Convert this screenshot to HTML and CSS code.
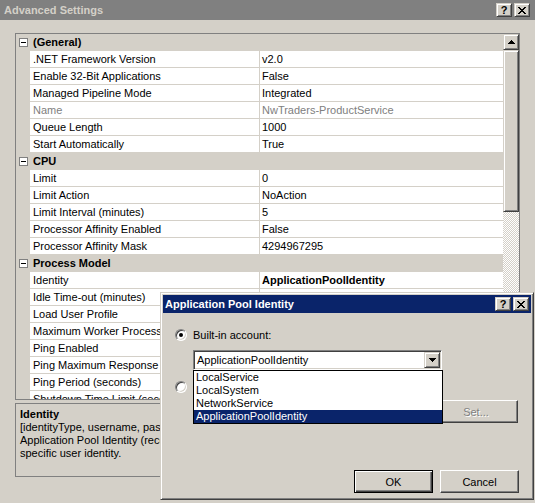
FILE: index.html
```html
<!DOCTYPE html>
<html lang="en">
<head>
  <meta charset="UTF-8" />
  <title>Advanced Settings</title>
  <link rel="stylesheet" href="styles.css">
</head>
<body>

<div class="window">
  <div class="titlebar inactive">
    <span class="title">Advanced Settings</span>
    <div class="caption-buttons">
      <span class="cap-btn">?</span>
      <span class="cap-btn">
        <svg width="8" height="7" viewBox="0 0 8 7"><path d="M0 0h2v1H0zM6 0h2v1H6zM1 1h2v1H1zM5 1h2v1H5zM2 2h4v1H2zM3 3h2v1H3zM2 4h4v1H2zM1 5h2v1H1zM5 5h2v1H5zM0 6h2v1H0zM6 6h2v1H6z" fill="#000"/></svg>
      </span>
    </div>
  </div>

  <div class="body">
    <div class="grid">
      <div class="rows">
        <div class="row cat"><span class="gutter"><span class="toggle"></span></span><span class="cat-label">(General)</span></div>
        <div class="row"><span class="gutter"></span><span class="name">.NET Framework Version</span><span class="value">v2.0</span></div>
        <div class="row"><span class="gutter"></span><span class="name">Enable 32-Bit Applications</span><span class="value">False</span></div>
        <div class="row"><span class="gutter"></span><span class="name">Managed Pipeline Mode</span><span class="value">Integrated</span></div>
        <div class="row readonly"><span class="gutter"></span><span class="name">Name</span><span class="value">NwTraders-ProductService</span></div>
        <div class="row"><span class="gutter"></span><span class="name">Queue Length</span><span class="value">1000</span></div>
        <div class="row"><span class="gutter"></span><span class="name">Start Automatically</span><span class="value">True</span></div>

        <div class="row cat"><span class="gutter"><span class="toggle"></span></span><span class="cat-label">CPU</span></div>
        <div class="row"><span class="gutter"></span><span class="name">Limit</span><span class="value">0</span></div>
        <div class="row"><span class="gutter"></span><span class="name">Limit Action</span><span class="value">NoAction</span></div>
        <div class="row"><span class="gutter"></span><span class="name">Limit Interval (minutes)</span><span class="value">5</span></div>
        <div class="row"><span class="gutter"></span><span class="name">Processor Affinity Enabled</span><span class="value">False</span></div>
        <div class="row"><span class="gutter"></span><span class="name">Processor Affinity Mask</span><span class="value">4294967295</span></div>

        <div class="row cat"><span class="gutter"><span class="toggle"></span></span><span class="cat-label">Process Model</span></div>
        <div class="row"><span class="gutter"></span><span class="name">Identity</span><span class="value changed">ApplicationPoolIdentity</span></div>
        <div class="row"><span class="gutter"></span><span class="name">Idle Time-out (minutes)</span><span class="value">20</span></div>
        <div class="row"><span class="gutter"></span><span class="name">Load User Profile</span><span class="value">False</span></div>
        <div class="row"><span class="gutter"></span><span class="name">Maximum Worker Processes</span><span class="value">1</span></div>
        <div class="row"><span class="gutter"></span><span class="name">Ping Enabled</span><span class="value">True</span></div>
        <div class="row"><span class="gutter"></span><span class="name">Ping Maximum Response Time (seconds)</span><span class="value">90</span></div>
        <div class="row"><span class="gutter"></span><span class="name">Ping Period (seconds)</span><span class="value">30</span></div>
        <div class="row"><span class="gutter"></span><span class="name">Shutdown Time Limit (seconds)</span><span class="value">90</span></div>
      </div>

      <div class="vscroll">
        <div class="sb-btn">
          <svg width="7" height="4" viewBox="0 0 7 4"><path d="M3 0h1v1h1v1h1v1h1v1H0V3h1V2h1V1h1z" fill="#000"/></svg>
        </div>
        <div class="sb-thumb"></div>
        <div class="sb-track"></div>
        <div class="sb-btn">
          <svg width="7" height="4" viewBox="0 0 7 4"><path d="M0 0h7v1H6v1H5v1H4v1H3V3H2V2H1V1H0z" fill="#000"/></svg>
        </div>
      </div>
    </div>

    <div class="desc">
      <div class="desc-title">Identity</div>
      <div class="desc-text">
        <div>[identityType, username, password] Configures the application pool to run as built-in account, i.e.</div>
        <div>Application Pool Identity (recommended), Network Service, Local System, Local Service, or as a</div>
        <div>specific user identity.</div>
      </div>
    </div>
  </div>
</div>

<!-- modal dialog on top of the settings window -->
<div class="dialog">
  <div class="titlebar active">
    <span class="title">Application Pool Identity</span>
    <div class="caption-buttons">
      <span class="cap-btn">?</span>
      <span class="cap-btn">
        <svg width="8" height="7" viewBox="0 0 8 7"><path d="M0 0h2v1H0zM6 0h2v1H6zM1 1h2v1H1zM5 1h2v1H5zM2 2h4v1H2zM3 3h2v1H3zM2 4h4v1H2zM1 5h2v1H1zM5 5h2v1H5zM0 6h2v1H0zM6 6h2v1H6z" fill="#000"/></svg>
      </span>
    </div>
  </div>

  <div class="dlg-body">
    <div class="radio-row first">
      <span class="radio on"></span>
      <span>Built-in account:</span>
    </div>

    <div class="combo">
      <span class="combo-text">ApplicationPoolIdentity</span>
      <span class="combo-btn">
        <svg width="7" height="4" viewBox="0 0 7 4"><path d="M0 0h7v1H6v1H5v1H4v1H3V3H2V2H1V1H0z" fill="#000"/></svg>
      </span>
    </div>

    <div class="radio-row second">
      <span class="radio"></span>
      <span>Custom account:</span>
    </div>

    <div class="custom-row">
      <span class="field"></span>
      <span class="btn disabled set-btn">Set...</span>
    </div>

    <div class="footer">
      <span class="btn default">OK</span>
      <span class="btn">Cancel</span>
    </div>

    <ul class="droplist">
      <li>LocalService</li>
      <li>LocalSystem</li>
      <li>NetworkService</li>
      <li class="selected">ApplicationPoolIdentity</li>
    </ul>
  </div>
</div>

</body>
</html>
```

FILE: styles.css
```css
body {
  margin: 0;
  width: 535px;
  height: 503px;
  overflow: hidden;
  position: relative;
  background: #d4d0c8;
  font-family: 'Liberation Sans', Arial, sans-serif;
  font-size: 11px;
  color: #000;
}

/* ---------- window chrome ---------- */

.window {
  height: 503px;
  display: flex;
  flex-direction: column;
}

.titlebar {
  height: 20px;
  flex: none;
  display: flex;
  align-items: center;
  justify-content: space-between;
  padding: 0 5px 0 4px;
  font-weight: bold;
}

.titlebar.inactive {
  background: #808080;
  color: #d4d0c8;
}

.titlebar.active {
  height: 18px;
  padding: 0 2px 0 2px;
  background: #0a246a;
  color: #fff;
}

.caption-buttons {
  display: flex;
  gap: 2px;
}

.cap-btn {
  width: 16px;
  height: 14px;
  box-sizing: border-box;
  display: flex;
  align-items: center;
  justify-content: center;
  background: #d4d0c8;
  border: 1px solid;
  border-color: #d4d0c8 #404040 #404040 #d4d0c8;
  box-shadow: inset 1px 1px #fff, inset -1px -1px #808080;
  color: #000;
  font-weight: bold;
  font-size: 11px;
  line-height: 1;
}

.body {
  flex: 1;
  padding: 13px 15px 0 15px;
}

/* ---------- property grid ---------- */

.grid {
  width: 505px;
  height: 367px;
  box-sizing: border-box;
  border: 1px solid #808080;
  display: flex;
  overflow: hidden;
}

.rows {
  width: 487px;
  flex: none;
}

.row {
  display: flex;
  height: 17px;
}

.gutter {
  width: 14px;
  flex: none;
  display: flex;
  align-items: center;
  justify-content: center;
}

.toggle {
  width: 9px;
  height: 9px;
  box-sizing: border-box;
  border: 1px solid #808080;
  background: #fff;
  position: relative;
}

.toggle::after {
  content: "";
  position: absolute;
  left: 1px;
  top: 3px;
  width: 5px;
  height: 1px;
  background: #000;
}

.cat-label {
  font-weight: bold;
  padding-left: 3px;
  line-height: 17px;
}

.name, .value {
  height: 17px;
  box-sizing: border-box;
  border-bottom: 1px solid #d4d0c8;
  background: #fff;
  line-height: 17px;
  white-space: nowrap;
  overflow: hidden;
}

.name {
  width: 230px;
  flex: none;
  border-right: 1px solid #d4d0c8;
  padding-left: 3px;
}

.value {
  flex: 1;
  padding-left: 2px;
}

.value.changed {
  font-weight: bold;
}

.readonly .name,
.readonly .value {
  color: #808080;
}

/* ---------- scrollbar ---------- */

.vscroll {
  width: 16px;
  flex: none;
  display: flex;
  flex-direction: column;
}

.sb-btn, .sb-thumb, .combo-btn {
  box-sizing: border-box;
  background: #d4d0c8;
  border: 1px solid;
  border-color: #d4d0c8 #404040 #404040 #d4d0c8;
  box-shadow: inset 1px 1px #fff, inset -1px -1px #808080;
}

.sb-btn {
  height: 16px;
  flex: none;
  display: flex;
  align-items: center;
  justify-content: center;
}

.sb-thumb {
  height: 162px;
  flex: none;
}

.sb-track {
  flex: 1;
  background: repeating-conic-gradient(#fff 0 25%, #d4d0c8 0 50%) 0 0 / 2px 2px;
}

/* ---------- description ---------- */

.desc {
  width: 505px;
  height: 74px;
  margin-top: 3px;
  box-sizing: border-box;
  border: 1px solid #808080;
  padding: 3px 4px;
  overflow: hidden;
  white-space: nowrap;
}

.desc-title {
  font-weight: bold;
  line-height: 14px;
}

.desc-text {
  line-height: 13px;
}

/* ---------- dialog ---------- */

.dialog {
  position: absolute;
  left: 160px;
  top: 292px;
  width: 374px;
  height: 208px;
  box-sizing: border-box;
  padding: 2px;
  display: flex;
  flex-direction: column;
  background: #d4d0c8;
  border: 1px solid;
  border-color: #d4d0c8 #404040 #404040 #d4d0c8;
  box-shadow: inset 1px 1px #fff, inset -1px -1px #808080;
}

.dlg-body {
  flex: 1;
  position: relative;
}

.radio-row {
  display: flex;
  align-items: center;
  gap: 6px;
  height: 12px;
  padding-left: 12px;
}

.radio-row.first {
  margin-top: 16px;
}

.radio-row.second {
  margin-top: 11px;
}

.radio {
  width: 12px;
  height: 12px;
  box-sizing: border-box;
  border-radius: 50%;
  background: #fff;
  border: 1px solid;
  border-color: #808080 #fff #fff #808080;
  box-shadow: inset 1px 1px #404040, inset -1px -1px #d4d0c8;
  position: relative;
}

.radio.on::after {
  content: "";
  position: absolute;
  left: 3px;
  top: 3px;
  width: 4px;
  height: 4px;
  border-radius: 50%;
  background: #000;
}

.combo, .field {
  box-sizing: border-box;
  background: #fff;
  border: 1px solid;
  border-color: #808080 #fff #fff #808080;
  box-shadow: inset 1px 1px #404040, inset -1px -1px #d4d0c8;
}

.combo {
  width: 249px;
  height: 20px;
  margin: 9px 0 0 30px;
  padding: 1px;
  display: flex;
  align-items: center;
  justify-content: space-between;
}

.combo-text {
  padding-left: 2px;
}

.combo-btn {
  width: 16px;
  height: 16px;
  display: flex;
  align-items: center;
  justify-content: center;
}

.custom-row {
  display: flex;
  align-items: center;
  margin: 7px 0 0 30px;
}

.field {
  width: 232px;
  height: 21px;
}

.btn {
  width: 79px;
  height: 23px;
  box-sizing: border-box;
  display: flex;
  align-items: center;
  justify-content: center;
  background: #d4d0c8;
  border: 1px solid;
  border-color: #fff #404040 #404040 #fff;
  box-shadow: inset -1px -1px #808080;
}

.btn.set-btn {
  width: 84px;
  margin-left: 9px;
}

.btn.disabled {
  color: #808080;
  text-shadow: 1px 1px 0 #fff;
}

.btn.default {
  border-color: #000;
  box-shadow: inset 1px 1px #fff, inset -1px -1px #404040, inset -2px -2px #808080;
}

.footer {
  display: flex;
  justify-content: flex-end;
  gap: 7px;
  margin-top: 47px;
  padding-right: 12px;
}

/* open dropdown of the combo */
.droplist {
  position: absolute;
  left: 30px;
  top: 57px;
  width: 250px;
  margin: 0;
  padding: 0;
  list-style: none;
  box-sizing: border-box;
  background: #fff;
  border: 1px solid #000;
}

.droplist li {
  height: 13px;
  line-height: 13px;
  padding-left: 2px;
}

.droplist li.selected {
  background: #0a246a;
  color: #fff;
}
```
